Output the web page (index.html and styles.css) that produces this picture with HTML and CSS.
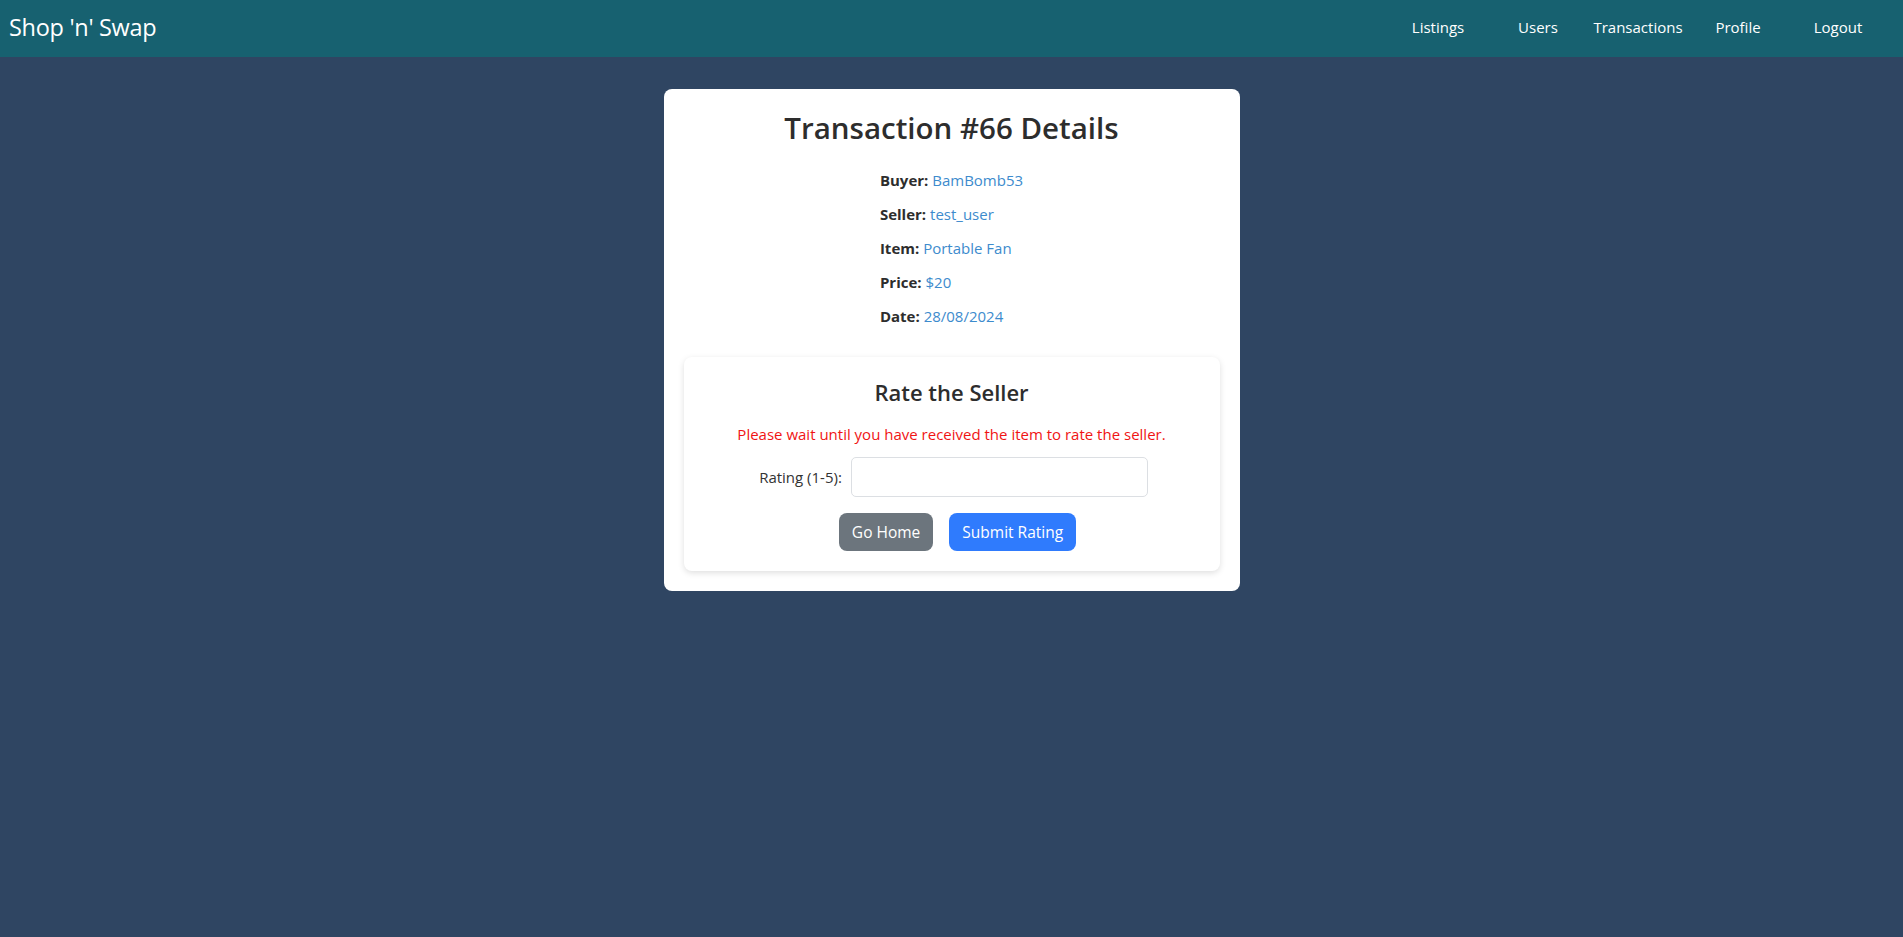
FILE: index.html
```html
<!DOCTYPE html>
<html lang="en">
<head>
<meta charset="utf-8">
<title>Shop 'n' Swap - Transaction #66</title>
<link rel="stylesheet" href="styles.css">
</head>
<body>
<nav class="navbar">
  <a class="brand" href="#">Shop 'n' Swap</a>
  <ul class="nav-links">
    <li><a href="#">Listings</a></li>
    <li><a href="#">Users</a></li>
    <li><a href="#">Transactions</a></li>
    <li><a href="#">Profile</a></li>
    <li><a href="#">Logout</a></li>
  </ul>
</nav>
<main class="page">
  <section class="card">
    <h2 class="card-title">Transaction #66 Details</h2>
    <div class="details">
      <p><strong>Buyer:</strong> <a href="#">BamBomb53</a></p>
      <p><strong>Seller:</strong> <a href="#">test_user</a></p>
      <p><strong>Item:</strong> <a href="#">Portable Fan</a></p>
      <p><strong>Price:</strong> <span class="val">$20</span></p>
      <p><strong>Date:</strong> <span class="val">28/08/2024</span></p>
    </div>
    <div class="rate-card">
      <h3 class="rate-title">Rate the Seller</h3>
      <p class="warning">Please wait until you have received the item to rate the seller.</p>
      <div class="rating-row">
        <label for="rating">Rating (1-5):</label>
        <input id="rating" class="rating-input" type="text">
      </div>
      <div class="actions">
        <button class="btn btn-gray" type="button">Go Home</button>
        <button class="btn btn-blue" type="button">Submit Rating</button>
      </div>
    </div>
  </section>
</main>
</body>
</html>
```
FILE: styles.css
```css
* { box-sizing: border-box; }

html, body {
  margin: 0;
  padding: 0;
}

body {
  background: #2f4562;
  font-family: "Open Sans", "Noto Sans", "Liberation Sans", sans-serif;
  color: #2d2d2d;
  min-height: 937px;
}

.navbar {
  height: 57px;
  background: #176170;
  display: flex;
  align-items: center;
  justify-content: space-between;
  padding: 0 15px 4px 9px;
}

.brand {
  color: #ffffff;
  text-decoration: none;
  font-size: 23.5px;
  line-height: 30px;
  letter-spacing: -0.3px;
}

.nav-links {
  list-style: none;
  margin: 0;
  padding: 0;
  display: flex;
}

.nav-links li {
  width: 100px;
  text-align: center;
}

.nav-links a {
  color: #ffffff;
  text-decoration: none;
  font-size: 15px;
  line-height: 24px;
}

.page {
  padding-top: 32px;
}

.card {
  width: 576px;
  margin: 0 auto;
  background: #ffffff;
  border-radius: 8px;
  padding: 20px;
}

.card-title {
  margin: 0 0 21px;
  text-align: center;
  font-size: 29.5px;
  font-weight: 600;
  line-height: 38px;
  color: #2d2d2d;
}

.details {
  width: fit-content;
  margin: 0 auto 29px;
  display: flex;
  flex-direction: column;
  gap: 10px;
}

.details p {
  margin: 0;
  font-size: 15px;
  line-height: 24px;
}

.details strong {
  font-weight: 700;
  color: #2d2d2d;
}

.details a,
.details .val {
  color: #3d8bcd;
  text-decoration: none;
}

.rate-card {
  border-radius: 8px;
  padding: 20px;
  text-align: center;
  box-shadow: 0 2px 6px rgba(0, 0, 0, 0.13);
}

.rate-title {
  margin: 0 0 15px;
  font-size: 22px;
  font-weight: 600;
  line-height: 30px;
  color: #2d2d2d;
}

.warning {
  margin: 0 0 11px;
  color: #f01414;
  font-size: 15px;
  line-height: 24px;
}

.rating-row {
  display: flex;
  justify-content: center;
  align-items: center;
  gap: 9px;
  margin-bottom: 16px;
  padding-left: 4px;
}

.rating-row label {
  font-size: 15px;
  color: #333333;
}

.rating-input {
  width: 297px;
  height: 40px;
  border: 1px solid #dcdfe3;
  border-radius: 5px;
  background: #ffffff;
  font: inherit;
}

.actions {
  display: flex;
  justify-content: center;
  gap: 16px;
  padding-left: 12px;
}

.btn {
  border: none;
  border-radius: 8px;
  padding: 7px 13px;
  font-family: inherit;
  font-size: 15.5px;
  line-height: 24px;
  color: #ffffff;
  cursor: pointer;
}

.btn-gray { background: #6c757d; }
.btn-blue { background: #2f7bfd; }
```
